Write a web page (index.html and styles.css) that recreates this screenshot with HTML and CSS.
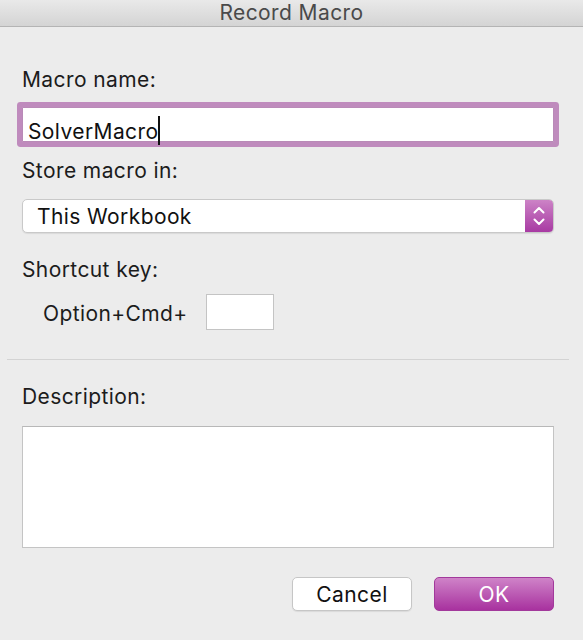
FILE: index.html
```html
<!DOCTYPE html>
<html lang="en">
<head>
    <meta charset="UTF-8">
    <meta name="viewport" content="width=device-width, initial-scale=1.0">
    <title>Record Macro</title>
    <link rel="stylesheet" href="styles.css">
</head>
<body>
    <div class="dialog">
        <div class="titlebar">Record Macro</div>

        <div class="form">
            <div class="label">Macro name:</div>
            <div class="field field-name">SolverMacro<span class="caret"></span></div>

            <div class="label label-store">Store macro in:</div>
            <div class="select">
                <span class="select-text">This Workbook</span>
                <span class="stepper">
                    <svg width="14" height="28" viewBox="0 0 14 28">
                        <path d="M2.5 10.5 L7 6 L11.5 10.5" fill="none" stroke="#fff" stroke-width="2" stroke-linecap="round" stroke-linejoin="round"/>
                        <path d="M2.5 17.5 L7 22 L11.5 17.5" fill="none" stroke="#fff" stroke-width="2" stroke-linecap="round" stroke-linejoin="round"/>
                    </svg>
                </span>
            </div>

            <div class="label label-shortcut">Shortcut key:</div>
            <div class="shortcut-row">
                <span class="shortcut-text">Option+Cmd+</span>
                <div class="key-box"></div>
            </div>

            <div class="separator"></div>

            <div class="label label-desc">Description:</div>
            <div class="textarea"></div>

            <div class="buttons">
                <button class="btn btn-cancel">Cancel</button>
                <button class="btn btn-ok">OK</button>
            </div>
        </div>
    </div>
</body>
</html>
```

FILE: styles.css
```css
body {
    margin: 0;
    background: #ececec;
    font-family: Inter, "Liberation Sans", sans-serif;
    color: #1c1c1c;
    letter-spacing: 0.4px;
}
.dialog {
    width: 583px;
    height: 640px;
    background: #ececec;
    overflow: hidden;
}
.titlebar {
    height: 26px;
    line-height: 25px;
    text-align: center;
    font-size: 21px;
    color: #4a4a4a;
    background: linear-gradient(#e9e9e9, #d4d4d4);
    border-bottom: 1px solid #b4b4b4;
}
.form {
    padding: 41px 29px 0 22px;
}
.label {
    font-size: 21px;
    line-height: 24px;
    height: 24px;
}
.field {
    box-sizing: border-box;
    height: 35px;
    background: white;
    border: 1px solid #b98ab7;
    font-size: 21px;
    line-height: 24px;
    padding: 8px 5px 2px;
}
.field-name {
    margin-top: 15px;
    box-shadow: 0 0 0 5px #bf8bbd;
    border-radius: 1px;
    color: #111;
}
.caret {
    display: inline-block;
    width: 2px;
    height: 29px;
    background: #111;
    vertical-align: -6px;
    margin-left: 0;
}
.label-store {
    margin-top: 17px;
}
.select {
    box-sizing: border-box;
    margin-top: 16px;
    height: 34px;
    display: flex;
    background: white;
    border: 1px solid #c9c9c9;
    border-radius: 5px;
    box-shadow: 0 1px 1px rgba(0,0,0,0.08);
    overflow: hidden;
}
.select-text {
    flex: 1;
    font-size: 21px;
    line-height: 24px;
    padding: 5px 0 0 14px;
    color: #111;
}
.stepper {
    width: 28px;
    display: flex;
    align-items: center;
    justify-content: center;
    background: linear-gradient(#cc83c6, #a83aa3);
}
.label-shortcut {
    margin-top: 25px;
}
.shortcut-row {
    display: flex;
    align-items: center;
    margin-top: 12px;
    padding-left: 21px;
}
.shortcut-text {
    font-size: 21px;
    line-height: 24px;
    padding-top: 3px;
}
.key-box {
    box-sizing: border-box;
    width: 68px;
    height: 36px;
    margin-left: 18px;
    background: white;
    border: 1px solid #c4c4c4;
}
.separator {
    margin: 29px -15px 0;
    height: 1px;
    background: #d3d3d3;
}
.label-desc {
    margin-top: 25px;
}
.textarea {
    box-sizing: border-box;
    margin-top: 17px;
    height: 122px;
    background: white;
    border: 1px solid #c4c4c4;
    border-top-color: #b8b8b8;
}
.buttons {
    display: flex;
    justify-content: flex-end;
    gap: 22px;
    margin-top: 29px;
}
.btn {
    box-sizing: border-box;
    width: 120px;
    height: 34px;
    font-family: Inter, "Liberation Sans", sans-serif;
    font-size: 21px;
    line-height: 24px;
    letter-spacing: 0.4px;
    border-radius: 5px;
    padding: 2px 0 0;
}
.btn-cancel {
    background: white;
    color: #111;
    border: 1px solid #c6c6c6;
    box-shadow: 0 1px 1px rgba(0,0,0,0.08);
}
.btn-ok {
    background: linear-gradient(#cf83c8, #a8329f);
    color: white;
    border: 1px solid #a2399b;
}
```
